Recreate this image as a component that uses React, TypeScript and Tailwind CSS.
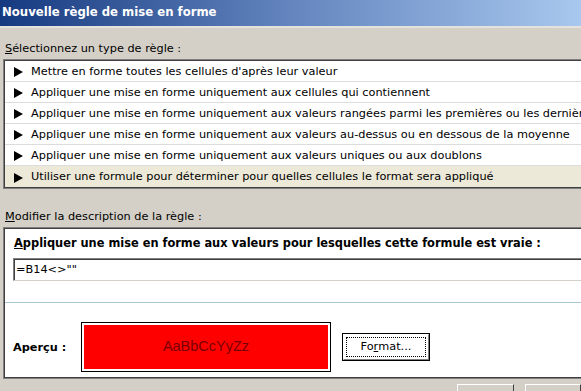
const rules = [
  "Mettre en forme toutes les cellules d'après leur valeur",
  "Appliquer une mise en forme uniquement aux cellules qui contiennent",
  "Appliquer une mise en forme uniquement aux valeurs rangées parmi les premières ou les dernières valeurs",
  "Appliquer une mise en forme uniquement aux valeurs au-dessus ou en dessous de la moyenne",
  "Appliquer une mise en forme uniquement aux valeurs uniques ou aux doublons",
  "Utiliser une formule pour déterminer pour quelles cellules le format sera appliqué",
];

function Arrow() {
  return (
    <svg width="9" height="10" viewBox="0 0 9 10" className="shrink-0">
      <path d="M0 0 L9 5 L0 10 Z" fill="#000" />
    </svg>
  );
}

export default function App() {
  return (
    <div className="w-[581px] h-[391px] overflow-hidden bg-[#d4d0c8] font-['DejaVu_Sans',Verdana,sans-serif] text-[11.3px] text-black">
      {/* title bar */}
      <div className="h-[26px] bg-gradient-to-r from-[#163a80] via-[#6485be] to-[#a8c8ee] flex items-center pl-[2px] text-white font-bold text-[11.7px] whitespace-nowrap">
        Nouvelle règle de mise en forme
      </div>
      <div className="h-[2px] bg-[#e4e2dc]" />

      <div className="h-[31px] pl-[5px] pt-[13px] leading-[15px] whitespace-nowrap">
        <span className="underline">S</span>électionnez un type de règle :
      </div>

      {/* rule type list */}
      <div className="ml-[3px] w-[620px] border border-[#808080]">
        <div className="border border-[#404040] bg-white">
          {rules.map((r, i) => (
            <div
              key={i}
              className={
                i === rules.length - 1
                  ? "h-[21px] flex items-center gap-[8px] pl-[9px] pt-[2px] bg-[#ece9d8] whitespace-nowrap"
                  : "h-[21px] flex items-center gap-[8px] pl-[9px] pt-[2px] border-b border-[#dcdcdc] whitespace-nowrap"
              }
            >
              <Arrow />
              <span>{r}</span>
            </div>
          ))}
        </div>
      </div>

      <div className="h-[38px] pl-[5px] pt-[20px] leading-[15px] whitespace-nowrap">
        <span className="underline">M</span>odifier la description de la règle :
      </div>

      {/* description box */}
      <div className="ml-[3px] w-[620px] h-[152px] border border-[#808080]">
        <div className="h-full border border-[#404040] bg-white flex flex-col">
          <div className="h-[29px] flex items-center pl-[9px] pt-[1px] font-bold text-[11.4px] whitespace-nowrap">
            <span className="underline">A</span>ppliquer une mise en forme aux valeurs pour lesquelles cette formule est vraie :
          </div>
          <div className="ml-[8px] h-[23px] border-t border-l border-[#808080] border-b border-b-[#d4d0c8]">
            <div className="h-full border-t border-l border-[#404040] flex items-center pl-[1px] pt-[1px]">
              =B14&lt;&gt;""
            </div>
          </div>
          <div className="h-[21px]" />
          <div className="h-px bg-[#a9c5d6]" />
          <div className="flex items-start pt-[19px] pl-[8px]">
            <div className="w-[68px] h-[50px] flex items-center pt-[2px] font-bold">Aperçu :</div>
            <div className="w-[250px] h-[50px] border border-black p-[2px] bg-white">
              <div className="w-full h-full bg-[#ff0000] flex items-center justify-center font-['Liberation_Sans',Arial,sans-serif] text-[14.5px] text-[#7a0000]">
                AaBbCcYyZz
              </div>
            </div>
            <div className="ml-[11px] mt-[11px] w-[88px] h-[28px] border border-black">
              <div className="h-full border-t border-l border-white border-r border-b border-r-[#808080] border-b-[#808080] p-[2px]">
                <div className="h-full border border-dotted border-black flex items-center justify-center">
                  Fo<span className="underline">r</span>mat...
                </div>
              </div>
            </div>
          </div>
        </div>
      </div>

      {/* bottom buttons */}
      <div className="flex gap-[11px] pl-[457px] pt-[5px]">
        <div className="w-[88px] h-[20px] border-t border-l border-white border-r border-r-[#404040]" />
        <div className="w-[88px] h-[20px] border-t border-l border-white border-r border-r-[#404040]" />
      </div>
    </div>
  );
}
